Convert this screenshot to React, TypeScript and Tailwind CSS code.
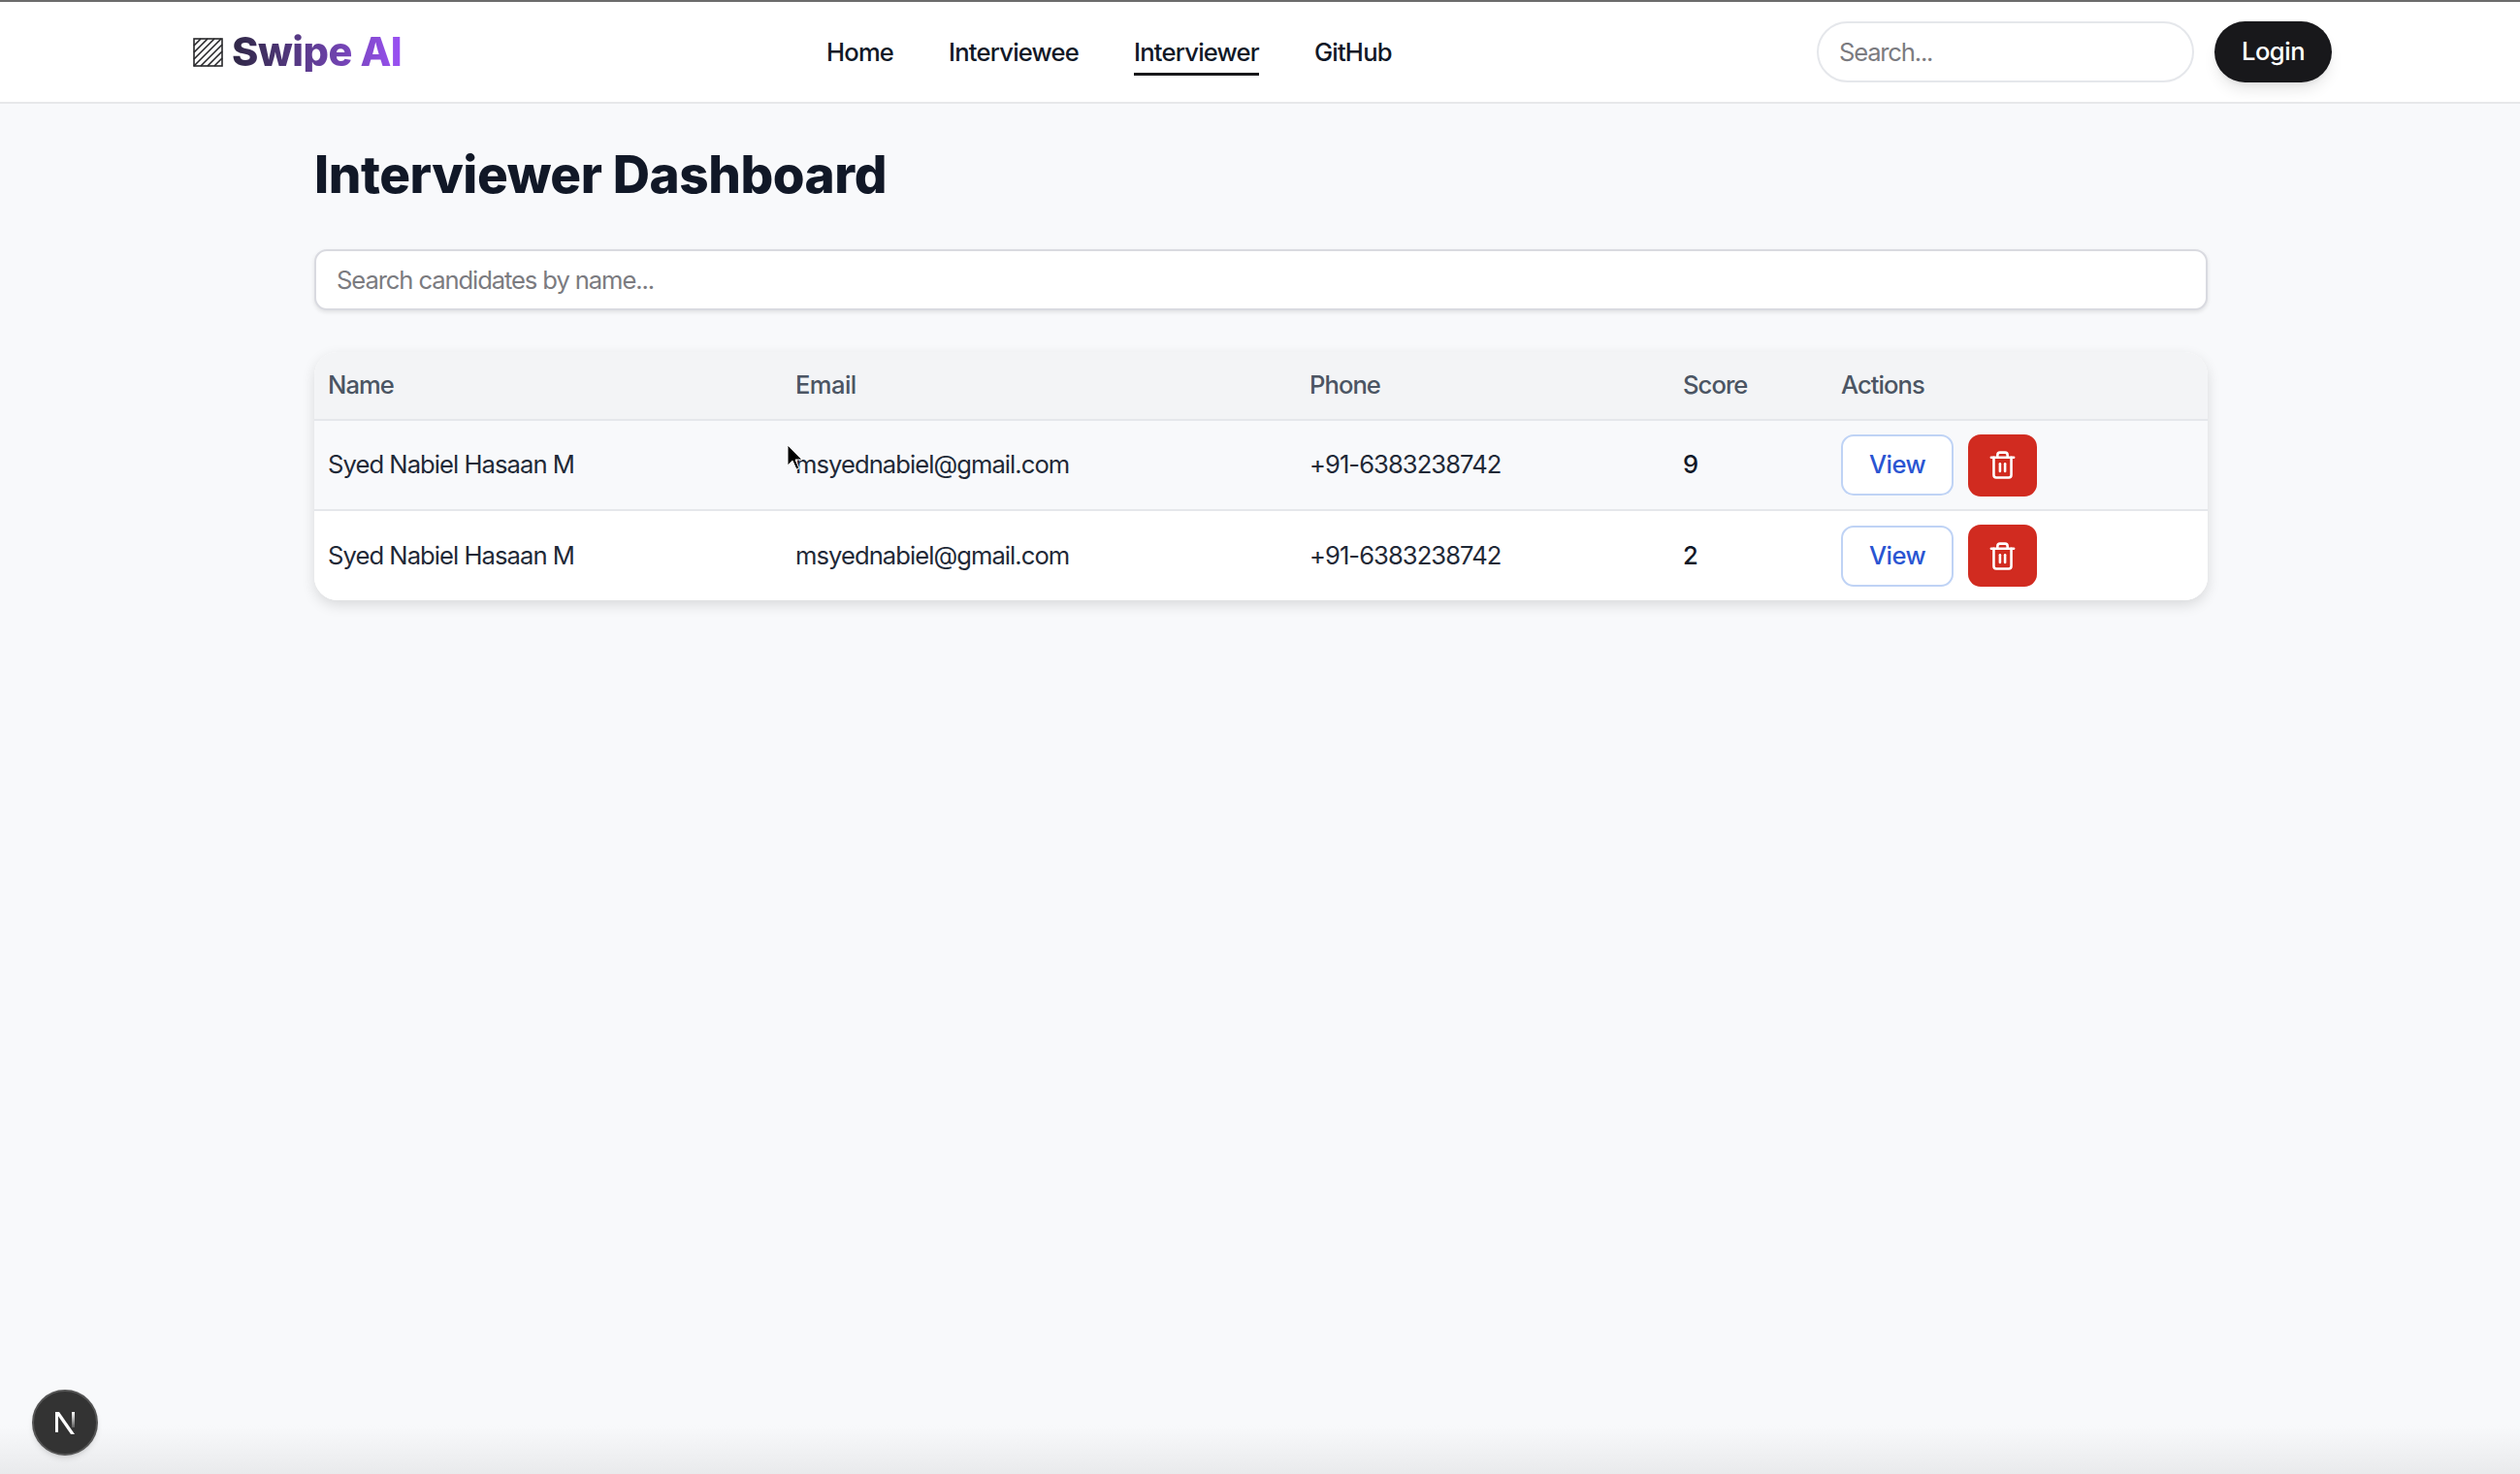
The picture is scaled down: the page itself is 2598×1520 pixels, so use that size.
import { Trash2 } from 'lucide-react';

const candidates = [
  { id: 1, name: 'Syed Nabiel Hasaan M', email: 'msyednabiel@gmail.com', phone: '+91-6383238742', score: 9 },
  { id: 2, name: 'Syed Nabiel Hasaan M', email: 'msyednabiel@gmail.com', phone: '+91-6383238742', score: 2 },
];

const navLinks = ['Home', 'Interviewee', 'Interviewer', 'GitHub'];

const Logo = () => (
  <div className="flex items-center gap-[9px]">
    <svg width="31" height="30" viewBox="0 0 31 30" fill="none" stroke="#27272a">
      <rect x="1" y="1" width="29" height="28" strokeWidth="1.6" />
      <path
        d="M1 8 8 1M1 15 15 1M1 22 22 1M1 29 29 1M8 29 30 7M15 29 30 14M22 29 30 21"
        strokeWidth="1.6"
      />
    </svg>
    <span className="bg-gradient-to-r from-[#2f2745] to-[#9b51f5] bg-clip-text text-[41.5px] leading-none font-extrabold tracking-[-0.5px] text-transparent">
      Swipe AI
    </span>
  </div>
);

const Header = () => (
  <header className="flex h-[107px] items-center justify-between border-t-2 border-b-2 border-t-[#6b6b6b] border-b-[#e7e8ea] bg-white pr-[194px] pl-[199px]">
    <Logo />
    <nav className="absolute left-[852px] flex gap-[57px] text-[25.6px] font-medium tracking-[-0.8px] text-[#111827]">
      {navLinks.map((link) => (
        <a key={link} href="#" className="relative leading-[38px]">
          {link}
          {link === 'Interviewer' && (
            <span className="absolute right-0 -bottom-[5px] left-0 h-[3px] bg-[#18181b]" />
          )}
        </a>
      ))}
    </nav>
    <div className="flex items-center gap-[21px]">
      <input
        placeholder="Search..."
        className="h-[63px] w-[389px] rounded-full border-2 border-[#e5e7eb] bg-white px-[21px] text-[25.6px] tracking-[-1.2px] outline-none placeholder:text-[#7b7b80]"
      />
      <button className="h-[63px] w-[121px] rounded-full bg-[#18181b] text-[25.6px] font-medium tracking-[-0.5px] text-white shadow-lg">
        Login
      </button>
    </div>
  </header>
);

const CandidateTable = () => (
  <div className="overflow-hidden rounded-[24px] bg-white shadow-[0_5px_14px_rgba(0,0,0,0.13)]">
    <table className="w-full table-fixed text-left text-[25.6px] tracking-[-0.95px]">
      <thead className="bg-[#f3f4f6] text-[#4b5563]">
        <tr className="h-[70px] border-b-2 border-[#e5e7eb]">
          <th className="w-[482px] pl-[14px] font-medium">Name</th>
          <th className="w-[530px] pl-[14px] font-medium tracking-[-0.6px]">Email</th>
          <th className="w-[385px] pl-[14px] font-medium">Phone</th>
          <th className="w-[163px] pl-[14px] font-medium">Score</th>
          <th className="pl-[14px] font-medium">Actions</th>
        </tr>
      </thead>
      <tbody className="text-[#1f2937]">
        {candidates.map((candidate, i) => (
          <tr
            key={candidate.id}
            className={i === 0 ? 'h-[93px] border-b-2 border-[#e5e7eb] bg-[#f8f9fb]' : 'h-[93px] bg-white'}
          >
            <td className="pl-[14px]">{candidate.name}</td>
            <td className="pl-[14px]">{candidate.email}</td>
            <td className="pl-[14px]">{candidate.phone}</td>
            <td className="pl-[14px] font-medium text-[#111827]">{candidate.score}</td>
            <td className="pl-[14px]">
              <div className="flex items-center gap-[15px]">
                <button className="h-[63px] w-[116px] rounded-[13px] border-2 border-[#bfd3f5] bg-white font-medium tracking-[-0.6px] text-[#2a55d2]">
                  View
                </button>
                <button className="flex h-[64px] w-[71px] items-center justify-center rounded-[13px] bg-[#d12b20] text-white">
                  <Trash2 size={31} strokeWidth={2} />
                </button>
              </div>
            </td>
          </tr>
        ))}
      </tbody>
    </table>
  </div>
);

export default function App() {
  return (
    <div className="relative h-[1520px] w-[2598px] overflow-hidden bg-[#f8f9fb] font-['Inter',sans-serif]">
      <Header />
      <main className="ml-[324px] w-[1952px] pt-[42px]">
        <h1 className="text-[53px] leading-[62px] font-extrabold tracking-[-0.45px] text-[#111827]">
          Interviewer Dashboard
        </h1>
        <input
          placeholder="Search candidates by name..."
          className="mt-[46px] h-[63px] w-full rounded-[13px] border-2 border-[#d9dae0] bg-white px-[21px] text-[25.6px] tracking-[-1.1px] shadow-[0_2px_4px_rgba(0,0,0,0.1)] outline-none placeholder:text-[#7b7b80]"
        />
        <div className="mt-[43px]">
          <CandidateTable />
        </div>
      </main>

      {/* mouse pointer caught in the recording */}
      <svg className="absolute top-[458px] left-[811px]" width="18" height="28" viewBox="0 0 18 28">
        <path d="M1 1v21l5-5 4 9 3-1-4-9h7z" fill="#000" stroke="#fff" strokeWidth="1" />
      </svg>

      <div className="absolute right-0 bottom-0 left-0 h-[50px] bg-gradient-to-b from-transparent to-[#e9eaec]" />

      {/* next dev indicator */}
      <div className="absolute top-[1433px] left-[33px] flex h-[68px] w-[68px] items-center justify-center rounded-full border-2 border-[#555] bg-[#333] shadow-md">
        <svg width="26" height="26" viewBox="0 0 26 26">
          <defs>
            <linearGradient id="nextFade" x1="0" y1="0" x2="0" y2="1">
              <stop offset="0" stopColor="#fff" />
              <stop offset="1" stopColor="#fff" stopOpacity="0.2" />
            </linearGradient>
          </defs>
          <path d="M3 2h3v21H3z" fill="#fff" />
          <path d="M3 2h4l16 23h-4z" fill="#fff" />
          <path d="M20 2h3v16h-3z" fill="url(#nextFade)" />
        </svg>
      </div>
    </div>
  );
}
